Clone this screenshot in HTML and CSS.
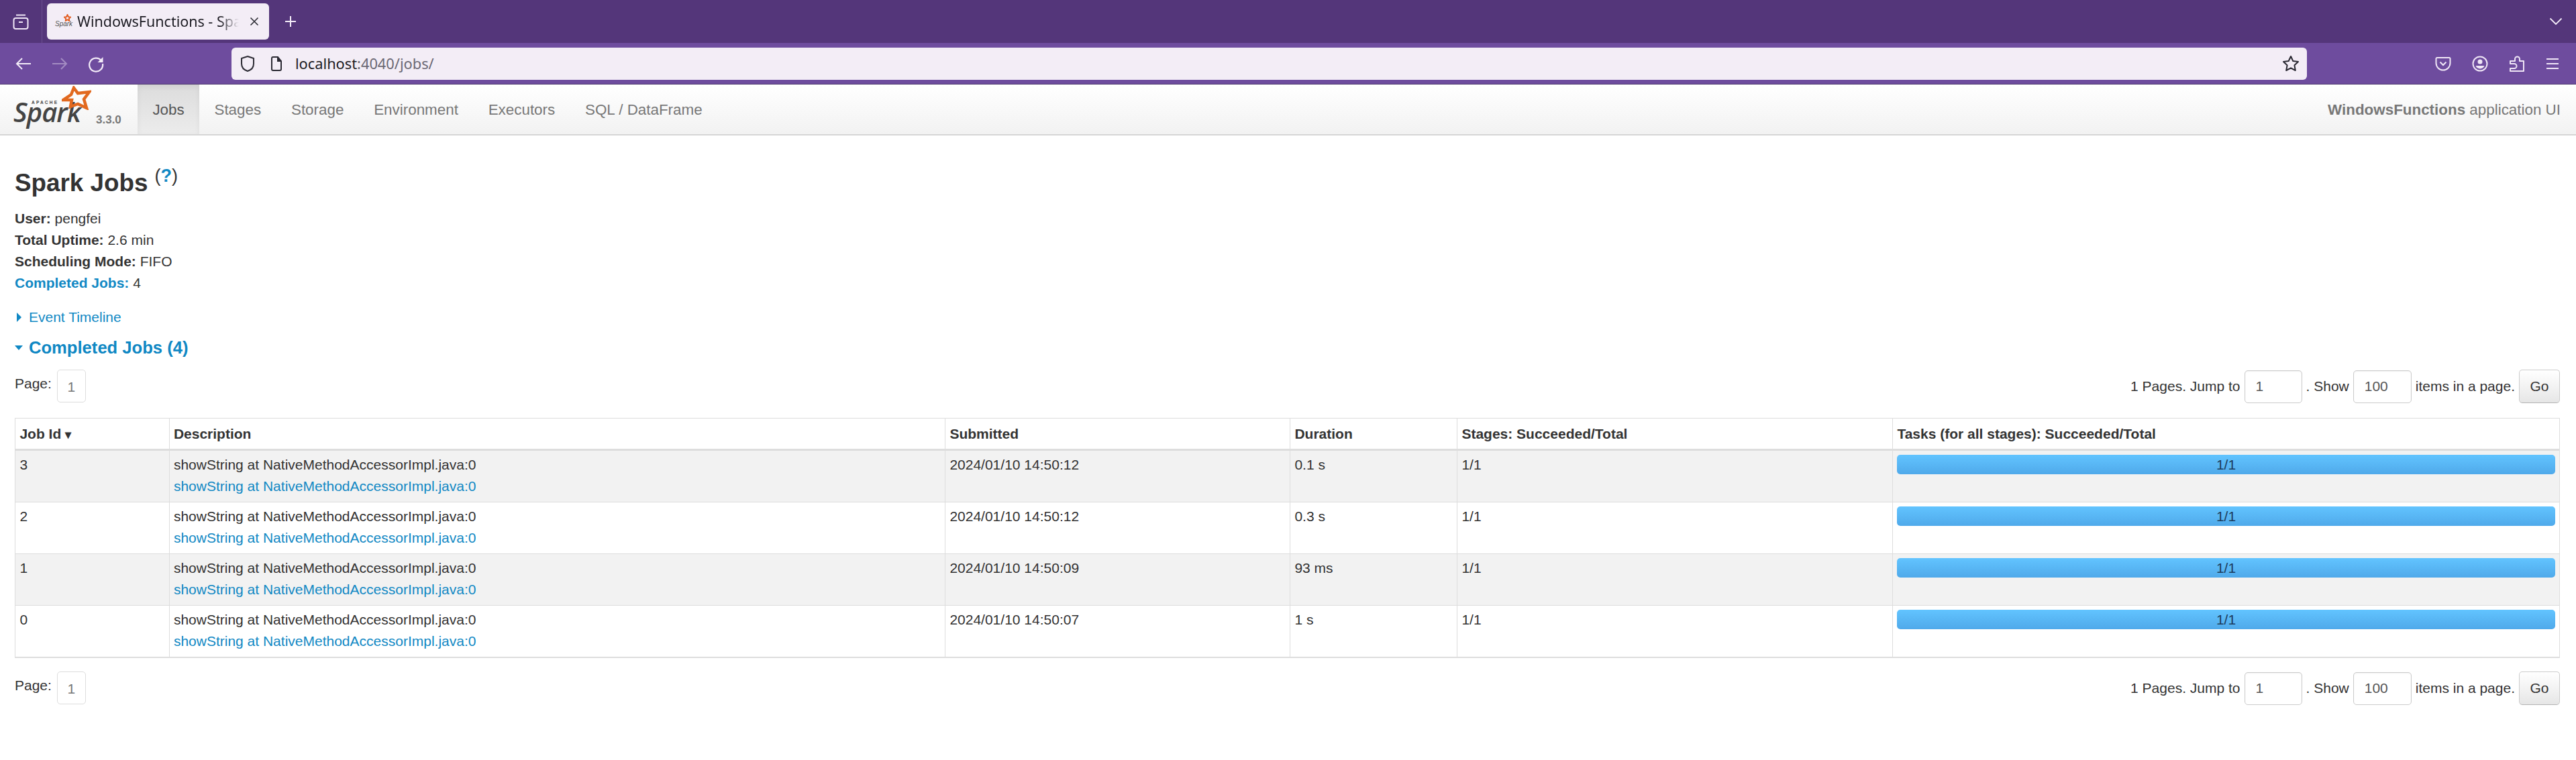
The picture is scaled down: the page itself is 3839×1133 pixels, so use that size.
FILE: index.html
```html
<!DOCTYPE html>
<html lang="en">
<head>
  <meta charset="UTF-8" />
  <title>WindowsFunctions - Spark Jobs</title>
  <link rel="stylesheet" href="styles.css">
</head>
<body>

  <!-- browser tab strip -->
  <div class="tabstrip">
    <div class="tabstripLeft">
      <svg class="icon" width="28" height="28" viewBox="0 0 28 28" fill="none" stroke="#efe6f6" stroke-width="2">
        <path d="M7 4.500h14"/>
        <rect x="3.500" y="9" width="21" height="16" rx="3"/>
        <path d="M11 15h6"/>
      </svg>
    </div>
    <div class="tab">
      <span class="favicon">
        <span class="faviconText">Spark</span>
        <svg class="faviconStar" width="11" height="11" viewBox="0 0 24 24" fill="none" stroke="#e25a1c" stroke-width="4"><path d="M12 2l3 7 7 1-5 5 1 7-6-4-6 4 1-7-5-5 7-1z"/></svg>
      </span>
      <span class="tabTitle">WindowsFunctions - Spa</span>
      <svg class="tabClose" width="16" height="16" viewBox="0 0 16 16" stroke="#2b2b33" stroke-width="1.600"><path d="M2.500 2.500l11 11M13.500 2.500l-11 11"/></svg>
    </div>
    <svg class="newTab" width="20" height="20" viewBox="0 0 20 20" stroke="#f3ecf8" stroke-width="2"><path d="M10 2v16M2 10h16"/></svg>
    <svg class="tabMenu" width="20" height="12" viewBox="0 0 20 12" fill="none" stroke="#f3ecf8" stroke-width="1.800"><path d="M1.500 1.500L10 10l8.500-8.500"/></svg>
  </div>

  <!-- browser toolbar -->
  <div class="toolbar">
    <div class="navButtons">
      <svg width="26" height="24" viewBox="0 0 26 24" fill="none" stroke="#f3ecf8" stroke-width="2"><path d="M24 12H3M11 4l-8 8 8 8"/></svg>
      <svg class="disabled" width="26" height="24" viewBox="0 0 26 24" fill="none" stroke="#f3ecf8" stroke-width="2"><path d="M2 12h21M15 4l8 8-8 8"/></svg>
      <svg width="26" height="26" viewBox="0 0 26 26" fill="none" stroke="#f3ecf8" stroke-width="2.200"><path d="M21 8.500A10 10 0 1 0 23 13"/><path d="M23.500 3v8h-8z" fill="#f3ecf8" stroke="none"/></svg>
    </div>
    <div class="urlbar">
      <svg width="22" height="26" viewBox="0 0 22 26" fill="none" stroke="#2b2a33" stroke-width="2"><path d="M11 2l9 3v8c0 6-4 9.500-9 11-5-1.500-9-5-9-11V5z"/></svg>
      <svg class="pageIcon" width="20" height="24" viewBox="0 0 20 24" fill="none" stroke="#2b2a33" stroke-width="2"><path d="M3 4a2 2 0 0 1 2-2h7l5 6v12a2 2 0 0 1-2 2H5a2 2 0 0 1-2-2z"/><path d="M12 2v6h5" fill="#2b2a33"/></svg>
      <span class="url"><span class="urlHost">localhost</span>:4040/jobs/</span>
      <svg class="star" width="26" height="25" viewBox="0 0 26 25" fill="none" stroke="#2b2a33" stroke-width="2" stroke-linejoin="round"><path d="M13 2l3.300 7 7.700 1-5.600 5.300 1.400 7.700L13 19.300 6.200 23l1.400-7.700L2 10l7.700-1z"/></svg>
    </div>
    <div class="toolIcons">
      <svg width="24" height="24" viewBox="0 0 24 24" fill="none" stroke="#efe6f6" stroke-width="2"><path d="M3 3h18a1.500 1.500 0 0 1 1.500 1.500V11a10.500 10.500 0 0 1-21 0V4.500A1.500 1.500 0 0 1 3 3z"/><path d="M7.500 9.500L12 14l4.500-4.500"/></svg>
      <svg width="24" height="24" viewBox="0 0 24 24" fill="none" stroke="#efe6f6" stroke-width="2"><circle cx="12" cy="12" r="10.500"/><circle cx="12" cy="9" r="3.500" fill="#efe6f6" stroke="none"/><path d="M5.500 15h13a7 7 0 0 1-13 0z" fill="#efe6f6" stroke="none"/></svg>
      <svg width="24" height="26" viewBox="0 0 24 26" fill="none" stroke="#efe6f6" stroke-width="2" stroke-linejoin="round"><path d="M2 9h7V6a3.500 3.500 0 0 1 7 0v3h6v15H2v-4h6a3 3 0 0 0 0-7H2z"/></svg>
      <svg width="20" height="18" viewBox="0 0 20 18" stroke="#efe6f6" stroke-width="2"><path d="M1 2h18M1 9h18M1 16h18"/></svg>
    </div>
  </div>

  <!-- spark navbar -->
  <nav class="navbar">
    <a class="brand">
      <span class="logo">
        <span class="logoApache">APACHE</span>
        <span class="logoSpark">Spark</span>
        <svg class="logoStar" width="44" height="36" viewBox="0 0 44 36" fill="none" stroke="#e2691f" stroke-width="4.500" stroke-linejoin="miter"><path d="M18 3l6 8 17-2-8 11 4 13-13-6-11 4 2-10-13 0 12-8z"/></svg>
      </span>
      <span class="version">3.3.0</span>
    </a>
    <ul class="navTabs">
      <li class="active">Jobs</li>
      <li>Stages</li>
      <li>Storage</li>
      <li>Environment</li>
      <li>Executors</li>
      <li>SQL / DataFrame</li>
    </ul>
    <p class="appName"><strong>WindowsFunctions</strong> application UI</p>
  </nav>

  <main class="content">
    <h3 class="pageTitle">Spark Jobs <sup class="helpMark">(<a>?</a>)</sup></h3>

    <ul class="summary">
      <li><strong>User:</strong> pengfei</li>
      <li><strong>Total Uptime:</strong> 2.6 min</li>
      <li><strong>Scheduling Mode:</strong> FIFO</li>
      <li><a><strong>Completed Jobs:</strong></a> 4</li>
    </ul>

    <div class="timelineToggle"><span class="arrowRight"></span><a>Event Timeline</a></div>

    <h4 class="sectionTitle"><span class="arrowDown"></span>Completed Jobs (4)</h4>

    <div class="pager">
      <div class="pageLinks"><span>Page:</span><span class="pageBox">1</span></div>
      <form class="pageForm">
        <span>1 Pages. Jump to</span>
        <input class="pageInput" type="text" value="1" />
        <span>. Show</span>
        <input class="pageInput sizeInput" type="text" value="100" />
        <span>items in a page.</span>
        <button class="goBtn" type="button">Go</button>
      </form>
    </div>

    <table class="jobsTable">
      <colgroup>
        <col class="colId"><col class="colDesc"><col class="colSubmitted"><col class="colDuration"><col class="colStages"><col>
      </colgroup>
      <thead>
        <tr>
          <th>Job Id <span class="sortMark">▾</span></th>
          <th>Description</th>
          <th>Submitted</th>
          <th>Duration</th>
          <th>Stages: Succeeded/Total</th>
          <th>Tasks (for all stages): Succeeded/Total</th>
        </tr>
      </thead>
      <tbody>
        <tr>
          <td>3</td>
          <td><div>showString at NativeMethodAccessorImpl.java:0</div><a>showString at NativeMethodAccessorImpl.java:0</a></td>
          <td>2024/01/10 14:50:12</td>
          <td>0.1 s</td>
          <td>1/1</td>
          <td><div class="progress">1/1</div></td>
        </tr>
        <tr>
          <td>2</td>
          <td><div>showString at NativeMethodAccessorImpl.java:0</div><a>showString at NativeMethodAccessorImpl.java:0</a></td>
          <td>2024/01/10 14:50:12</td>
          <td>0.3 s</td>
          <td>1/1</td>
          <td><div class="progress">1/1</div></td>
        </tr>
        <tr>
          <td>1</td>
          <td><div>showString at NativeMethodAccessorImpl.java:0</div><a>showString at NativeMethodAccessorImpl.java:0</a></td>
          <td>2024/01/10 14:50:09</td>
          <td>93 ms</td>
          <td>1/1</td>
          <td><div class="progress">1/1</div></td>
        </tr>
        <tr>
          <td>0</td>
          <td><div>showString at NativeMethodAccessorImpl.java:0</div><a>showString at NativeMethodAccessorImpl.java:0</a></td>
          <td>2024/01/10 14:50:07</td>
          <td>1 s</td>
          <td>1/1</td>
          <td><div class="progress">1/1</div></td>
        </tr>
      </tbody>
    </table>

    <div class="pager">
      <div class="pageLinks"><span>Page:</span><span class="pageBox">1</span></div>
      <form class="pageForm">
        <span>1 Pages. Jump to</span>
        <input class="pageInput" type="text" value="1" />
        <span>. Show</span>
        <input class="pageInput sizeInput" type="text" value="100" />
        <span>items in a page.</span>
        <button class="goBtn" type="button">Go</button>
      </form>
    </div>
  </main>

</body>
</html>
```

FILE: styles.css
```css
* {
  box-sizing: border-box;
}
html, body {
  height: 1133px;
  overflow: hidden;
}
body {
  margin: 0;
  background-color: #fff;
  color: #333;
  font-family: "Liberation Sans", Arial, sans-serif;
  font-size: 21px;
  line-height: 32px;
}
a {
  color: #1088c4;
}
svg {
  display: block;
  flex: none;
}

/* browser chrome */
.tabstrip {
  display: flex;
  align-items: center;
  height: 64px;
  background-color: #54367a;
}
.tabstripLeft {
  display: flex;
  align-items: center;
  justify-content: center;
  width: 63px;
  height: 64px;
  border-right: 1px solid #6c5090;
  margin-right: 7px;
}
.tab {
  display: flex;
  align-items: center;
  width: 331px;
  height: 54px;
  margin-top: -1px;
  padding-left: 12px;
  background-color: #f3edf6;
  border-radius: 6px;
  color: #1c1b22;
  font-family: "Noto Sans", sans-serif;
  font-size: 21.500px;
}
.favicon {
  position: relative;
  width: 24px;
  height: 18px;
  margin-right: 9px;
  flex: none;
}
.faviconText {
  position: absolute;
  left: 0;
  bottom: -1px;
  color: #555;
  font-family: "Liberation Sans", sans-serif;
  font-size: 10px;
  line-height: 12px;
  font-style: italic;
}
.faviconStar {
  position: absolute;
  right: 0;
  top: -2px;
}
.tabTitle {
  width: 241px;
  flex: none;
  white-space: nowrap;
  -webkit-mask-image: linear-gradient(to right, #000 88%, transparent 100%);
  mask-image: linear-gradient(to right, #000 88%, transparent 100%);
}
.tabClose {
  margin-left: 15px;
}
.newTab {
  margin-left: 22px;
}
.tabMenu {
  margin-left: auto;
  margin-right: 20px;
}
.toolbar {
  display: flex;
  align-items: center;
  height: 62px;
  background-color: #6e4c9e;
  border-bottom: 1px solid #4f3a70;
}
.navButtons {
  display: flex;
  align-items: center;
  gap: 28px;
  width: 345px;
  flex: none;
  padding-left: 22px;
}
.navButtons .disabled {
  opacity: 0.4;
}
.urlbar {
  display: flex;
  align-items: center;
  width: 3093px;
  flex: none;
  height: 48px;
  padding: 0 11px 0 13px;
  background-color: #f3edf6;
  border-radius: 6px;
  color: #6a6773;
  font-family: "Noto Sans", sans-serif;
  font-size: 21.800px;
}
.pageIcon {
  margin-left: 22px;
  margin-right: 18px;
}
.urlHost {
  color: #1c1b22;
}
.star {
  margin-left: auto;
}
.toolIcons {
  display: flex;
  align-items: center;
  gap: 31px;
  margin-left: 191px;
}

/* spark navbar */
.navbar {
  display: flex;
  align-items: stretch;
  height: 76px;
  background: linear-gradient(to bottom, #ffffff, #f2f2f2);
  border-bottom: 2px solid #d6d6d6;
}
.brand {
  display: flex;
  align-items: flex-end;
  width: 205px;
  padding-left: 20px;
}
.logo {
  position: relative;
  display: block;
  width: 122px;
  height: 70px;
  flex: none;
}
.logoApache {
  position: absolute;
  left: 27px;
  top: 19px;
  color: #444;
  font-size: 6.500px;
  line-height: 8px;
  font-weight: 700;
  letter-spacing: 2.200px;
}
.logoSpark {
  position: absolute;
  left: 0;
  top: 12px;
  color: #444;
  font-family: "Open Sans", sans-serif;
  font-size: 40px;
  line-height: 50px;
  font-style: italic;
  font-weight: 600;
  letter-spacing: -1px;
}
.logoStar {
  position: absolute;
  left: 72px;
  top: -2px;
}
.version {
  margin-left: 1px;
  margin-bottom: 5px;
  color: #777;
  font-size: 17px;
  line-height: 32px;
  font-weight: 700;
}
.navTabs {
  display: flex;
  margin: 0;
  padding: 0;
  list-style: none;
}
.navTabs li {
  padding: 0 22.400px;
  color: #777;
  font-size: 22.400px;
  line-height: 76px;
}
.navTabs .active {
  background: linear-gradient(to bottom, #dcdcdc, #ececec);
  color: #555;
  box-shadow: inset 0 3px 8px rgba(0, 0, 0, 0.06);
}
.appName {
  margin: 0 23px 0 auto;
  color: #777;
  font-size: 22.400px;
  line-height: 76px;
}

/* page */
.content {
  padding: 39px 24px 0 22px;
}
.pageTitle {
  margin: 0 0 5px;
  color: #333;
  font-size: 36.800px;
  line-height: 64px;
  font-weight: 700;
}
.helpMark {
  font-size: 27px;
  line-height: 0;
  vertical-align: 14px;
  font-weight: 400;
}
.helpMark a {
  font-weight: 700;
}
.summary {
  margin: 0 0 19px;
  padding: 0;
  list-style: none;
}
.timelineToggle {
  display: flex;
  align-items: center;
  margin-bottom: 13px;
}
.arrowRight {
  width: 0;
  height: 0;
  margin: 0 11px 0 3px;
  border-top: 7px solid transparent;
  border-bottom: 7px solid transparent;
  border-left: 7px solid #1088c4;
}
.sectionTitle {
  display: flex;
  align-items: center;
  margin: 0 0 17px;
  color: #1088c4;
  font-size: 25.600px;
  line-height: 32px;
  font-weight: 700;
}
.arrowDown {
  width: 0;
  height: 0;
  margin-right: 9px;
  border-left: 6px solid transparent;
  border-right: 6px solid transparent;
  border-top: 7px solid #1088c4;
}

/* pagination */
.pager {
  display: flex;
  justify-content: space-between;
  height: 50px;
}
.pageLinks {
  display: flex;
  align-items: flex-start;
  gap: 8px;
}
.pageLinks > span:first-child {
  padding-top: 5px;
}
.pageBox {
  width: 43px;
  height: 49px;
  border: 1px solid #ddd;
  border-radius: 5px;
  color: #777;
  line-height: 49px;
  text-align: center;
}
.pageForm {
  display: flex;
  align-items: center;
  gap: 6px;
  margin: 0;
}
.pageInput {
  width: 86px;
  height: 49px;
  padding: 0 16px;
  border: 1px solid #ccc;
  border-radius: 5px;
  box-shadow: inset 0 1px 2px rgba(0, 0, 0, 0.07);
  color: #555;
  font: inherit;
}
.sizeInput {
  width: 87px;
}
.goBtn {
  width: 61px;
  height: 50px;
  padding: 0;
  background: linear-gradient(to bottom, #ffffff, #e6e6e6);
  border: 1px solid #ccc;
  border-bottom-color: #b3b3b3;
  border-radius: 5px;
  color: #333;
  font: inherit;
}

/* jobs table */
.jobsTable {
  width: 100%;
  margin: 22px 0 20px;
  table-layout: fixed;
  border-collapse: collapse;
  border: 1px solid #ddd;
  border-bottom-width: 2px;
}
.colId {
  width: 229.500px;
}
.colDesc {
  width: 1156.500px;
}
.colSubmitted {
  width: 514px;
}
.colDuration {
  width: 249px;
}
.colStages {
  width: 649px;
}
.jobsTable th, .jobsTable td {
  text-align: left;
  vertical-align: top;
  border-left: 1px solid #ddd;
}
.jobsTable th {
  padding: 7px 6.400px 5px;
  border-bottom: 3px solid #ddd;
}
.jobsTable td {
  padding: 5px 6.400px 7px;
  border-top: 1px solid #ddd;
}
.jobsTable tbody tr:nth-child(odd) {
  background-color: #f2f2f2;
}
.sortMark {
  font-size: 18px;
}
.progress {
  height: 29px;
  margin-top: 1px;
  background: linear-gradient(to bottom, #62c4ff, #4fa9ea);
  border-radius: 5px;
  color: #1d3c5c;
  line-height: 29px;
  text-align: center;
}
```
